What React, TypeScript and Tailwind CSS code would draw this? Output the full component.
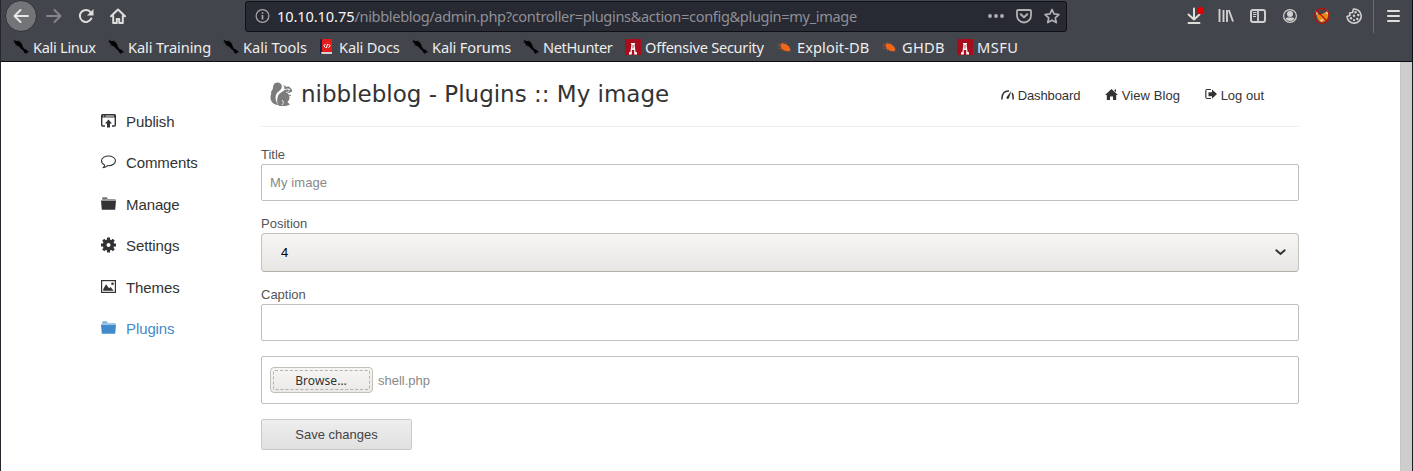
import React from 'react';

const CHROME = "font-['Noto_Sans',sans-serif]";

function Svg({ w = 16, h = 16, vb, className = '', children }: { w?: number; h?: number; vb?: string; className?: string; children: React.ReactNode }) {
  return (
    <svg width={w} height={h} viewBox={vb ?? `0 0 ${w} ${h}`} className={`block shrink-0 ${className}`} fill="none">
      {children}
    </svg>
  );
}

const Kali = () => (
  <Svg>
    <path d="M.5.5L3 2l2 0 2.500 1.200L9 5l.8 2.800 1.400 2 1.800.7 2.700 2.200-.5.800-2 .2 0 1.500-2.200-2-.7-1.700L8 9.800 6 7.500 3.500 6 2 4z" fill="#000" />
    <path d="M0 3l4 2.500M2 6.500l4 .5M5 1.500l3 1.500" stroke="#111" strokeWidth=".5" />
  </Svg>
);
const Docs = () => (
  <Svg>
    <path d="M1 1.500C1 .6 1.600 0 2.500 0H4v15H1z" fill="#16233f" />
    <path d="M3 0h10v13H3z" fill="#e21b1b" />
    <path d="M2 13h11v2H2.500z" fill="#d6d0d0" />
    <path d="M6.500 5L4.900 6.800l1.600 1.800M9.500 5l1.700 1.800-1.700 1.800M8.600 4.800L7.400 9" stroke="#fff" strokeWidth="1" />
  </Svg>
);
const Tower = () => (
  <Svg>
    <path d="M0 0h16v16H0z" fill="#a90d1c" />
    <path d="M6 4h4v1.200h-.5l1.100 8H12V15.500H9.200V11H6.800v4.500H4v-2.300h1.400l1.100-8H6z" fill="#fff" />
    <path d="M7.600 6h.8v3.500h-.8z" fill="#a90d1c" />
  </Svg>
);
const Bug = () => (
  <Svg>
    <path d="M3.500 5.500l1.500-1.200 4 1 3 2.200 1.500 3-1.500 2-3.500-.5-4-2z" fill="#f2661a" />
    <path d="M1 5l3 .5M1 9.500l4-.5M5 3l2 2M8 3l2 3M5 12l2-2M13 12l1.500.5M0 7h4" stroke="#b0552a" strokeWidth=".6" />
  </Svg>
);

const bookmarks: { label: string; icon: React.ReactNode; box: string; spacing: string }[] = [
  { label: 'Kali Linux', icon: <Kali />, box: 'w-[95px]', spacing: 'tracking-[-0.3px]' },
  { label: 'Kali Training', icon: <Kali />, box: 'w-[115px]', spacing: 'tracking-[-0.1px]' },
  { label: 'Kali Tools', icon: <Kali />, box: 'w-[96px]', spacing: '' },
  { label: 'Kali Docs', icon: <Docs />, box: 'w-[93px]', spacing: 'tracking-[-0.15px]' },
  { label: 'Kali Forums', icon: <Kali />, box: 'w-[111px]', spacing: 'tracking-[-0.15px]' },
  { label: 'NetHunter', icon: <Kali />, box: 'w-[102px]', spacing: 'tracking-[-0.4px]' },
  { label: 'Offensive Security', icon: <Tower />, box: 'w-[152px]', spacing: 'tracking-[-0.27px]' },
  { label: 'Exploit-DB', icon: <Bug />, box: 'w-[105px]', spacing: 'tracking-[0.1px]' },
  { label: 'GHDB', icon: <Bug />, box: 'w-[75px]', spacing: 'tracking-[0.3px]' },
  { label: 'MSFU', icon: <Tower />, box: 'w-[70px]', spacing: 'tracking-[0.5px]' },
];

function Toolbar() {
  return (
    <div className="flex h-8 items-center pl-1 text-[#d8d8d8]">
      <div className="flex h-8 w-8 shrink-0 items-center justify-center rounded-full border border-[#303136] bg-[#737478]">
        <Svg><path d="M15 8H1.800M7.500 2L1.500 8l6 6" stroke="#e6e6e4" strokeWidth="2" strokeLinecap="round" strokeLinejoin="round" /></Svg>
      </div>
      <Svg className="ml-[9px]"><path d="M1 8h13.200M8.500 2l6 6-6 6" stroke="#85868a" strokeWidth="2" strokeLinecap="round" strokeLinejoin="round" /></Svg>
      <Svg className="ml-4">
        <path d="M13.300 10.500A6 6 0 1 1 12.700 4.300" stroke="#dededa" strokeWidth="2" strokeLinecap="round" />
        <path d="M15.500 1v6.500H9z" fill="#dededa" />
      </Svg>
      <Svg className="ml-4">
        <path d="M1 8.200l7-6.700 7 6.700M3.200 8v7h3.600v-4h2.400v4h3.600V8" stroke="#dededa" strokeWidth="2" strokeLinejoin="round" strokeLinecap="round" />
      </Svg>
      <div className="ml-[119px] flex h-[31px] w-[822px] shrink-0 items-center rounded-[3px] border border-[#0f1014] bg-[#272933] pl-[9px] pr-[6px]">
        <Svg>
          <circle cx="7.500" cy="8" r="6.400" stroke="#a9a9ac" strokeWidth="1.200" />
          <path d="M7.500 7v4.500M7.500 4.200v1.600" stroke="#a9a9ac" strokeWidth="1.700" />
        </Svg>
        <span className={`${CHROME} ml-[6px] w-[590px] whitespace-nowrap text-[14.6px] leading-[20px] tracking-[-0.35px] text-[#8f9096]`}>
          <span className="tracking-[-0.1px] text-[#f5f5f5]">10.10.10.75</span>/nibbleblog/admin.php?controller=plugins&amp;action=config&amp;plugin=my_image
        </span>
        <div className="ml-auto flex items-center gap-3">
          <Svg><circle cx="2" cy="8" r="1.900" fill="#b2b2b4" /><circle cx="8" cy="8" r="1.900" fill="#b2b2b4" /><circle cx="14" cy="8" r="1.900" fill="#b2b2b4" /></Svg>
          <Svg>
            <path d="M2 2h12a1 1 0 0 1 1 1v4.500a7 7 0 0 1-14 0V3a1 1 0 0 1 1-1z" stroke="#b2b2b4" strokeWidth="1.800" />
            <path d="M4.700 6.200L8 9.300l3.300-3.100" stroke="#b2b2b4" strokeWidth="2" strokeLinecap="round" strokeLinejoin="round" />
          </Svg>
          <Svg><path d="M8 1.500l2 4.400 4.900.6-3.600 3.300 1 4.800L8 12.200l-4.300 2.400 1-4.800L1.100 6.500 6 5.900z" stroke="#b2b2b4" strokeWidth="1.700" strokeLinejoin="round" /></Svg>
        </div>
      </div>
      <div className="ml-[119px] flex items-center gap-4">
        <Svg className="overflow-visible">
          <path d="M8 .5V11M2.500 6.500L8 11.500l5.500-5M2.500 15h11" stroke="#dededa" strokeWidth="2" strokeLinecap="round" strokeLinejoin="round" />
          <circle cx="14.500" cy="2.700" r="3.600" fill="#e00000" />
        </Svg>
        <Svg><path d="M1.500 1v13M5.500 2v12M9 2v12M10.800 2l4.200 11.500" stroke="#d0d0ce" strokeWidth="1.900" /></Svg>
        <Svg>
          <rect x="1" y="2" width="14" height="12" rx="2" stroke="#d0d0ce" strokeWidth="2" />
          <path d="M8 2v12" stroke="#d0d0ce" strokeWidth="1.800" /><path d="M3 4.500h3.500M3 6.500h3.500M3 8.500h3" stroke="#d0d0ce" />
        </Svg>
        <Svg>
          <circle cx="8" cy="8" r="6.400" stroke="#d0d0ce" strokeWidth="1.200" />
          <circle cx="8" cy="6" r="3" fill="#d0d0ce" /><path d="M3.500 10.500C5 9 6 9.500 8 9.500s3-.5 4.500 1A5 5 0 0 1 8 13a5 5 0 0 1-4.500-2.500z" fill="#d0d0ce" />
        </Svg>
        <Svg>
          <path d="M2 5l4 2 4-2 4-2 .5 5-2 4-4 2.500-3-1-2-3z" fill="#e58a12" />
          <path d="M1 3l3 1.500L3 7zM14 2l-2.500 3L14 6.500zM6 12l3-1-1 3z" fill="#e6ddd4" />
          <circle cx="8" cy="8" r="7.300" stroke="#c30d0d" strokeWidth="1.200" /><path d="M3 3l10 10" stroke="#c30d0d" strokeWidth="1.200" />
        </Svg>
        <Svg>
          <path d="M7.500 1A7.100 7.100 0 1 1 1 8.500L4 7.500 3.500 5l3-.5z" stroke="#d0d0ce" strokeWidth="1.600" strokeLinejoin="round" />
          <g fill="#d0d0ce"><circle cx="9.500" cy="4.300" r="1.200" /><circle cx="12.300" cy="7" r="1.200" /><circle cx="8" cy="7.800" r="1.200" /><circle cx="11.300" cy="11" r="1.200" /><circle cx="5" cy="10.300" r="1.200" /><circle cx="8" cy="12.200" r="1.100" /></g>
        </Svg>
      </div>
      <div className="ml-[11px] h-[33px] w-px bg-[#6b6c71]" />
      <Svg className="ml-3"><path d="M2 3h11M2 8h11M2 13h11" stroke="#dededa" strokeWidth="2" strokeLinecap="round" /></Svg>
    </div>
  );
}

const side: { label: string; icon: React.ReactNode; active?: boolean }[] = [
  { label: 'Publish', icon: <><path d="M4 12H1.600Q.7 12 .7 11V1.500Q.7.700 1.600.7h11.800q.9 0 .9.800V11q0 1-.9 1H11" stroke="currentColor" strokeWidth="1.400" /><path d="M1 1h13v2.500H1z" fill="currentColor" /><path d="M2 2h1.200M4.500 2h8.500" stroke="#fff" strokeWidth=".9" /><path d="M7.500 5.500l3.500 4H9V13.500H6V9.500H4z" fill="currentColor" /></> },
  { label: 'Comments', icon: <path d="M2 12.700c1.300-.7 1.700-1.500 1.600-2.700C1.500 9 .5 7.700.5 5.800.5 3.100 3.700 1 7.500 1s7 2.100 7 4.800-3.200 4.900-7 4.900l-1-.1c-1 1.100-2.800 1.900-4.500 2.100z" stroke="currentColor" strokeWidth="1.100" strokeLinejoin="round" /> },
  { label: 'Manage', icon: <Folder /> },
  { label: 'Settings', icon: <><circle cx="7.500" cy="7" r="3.900" stroke="currentColor" strokeWidth="3.800" /><path d="M7.500 -.5v3M7.500 11.500v3M0 7h3M12 7h3M2.200 1.700l2 2M10.800 10.300l2 2M12.800 1.700l-2 2M4.200 10.300l-2 2" stroke="currentColor" strokeWidth="3" /></> },
  { label: 'Themes', icon: <><rect x=".6" y=".6" width="13.800" height="11.800" stroke="currentColor" strokeWidth="1.200" /><path d="M2.200 10.800V9.300l2.800-5 3 4 1.500-1.200 3.200 3.700z" fill="currentColor" /><circle cx="11.500" cy="3.800" r="1.300" fill="currentColor" /></> },
  { label: 'Plugins', icon: <Folder />, active: true },
];

function Folder() {
  return (
    <>
      <path d="M1 3V1.200h5l1 .8h7.500v1z" fill="currentColor" opacity=".5" />
      <path d="M1.500.5h4.200l.8 1H1.500z" fill="currentColor" />
      <path d="M0 3.500h15l-.8 9.300H.8z" fill="currentColor" />
    </>
  );
}

function Squirrel() {
  return (
    <Svg w={23} h={25} className="ml-[9px]">
      <path d="M1 10C2 8 3 7.500 3 5 3.500 1.500 6 0 9 .8c3 .7 3.500 4 2.200 6-1.500 2.500-5 3.700-5.500 7.500-.5 3 .5 6 2.500 8.700C3 23 .5 19 .5 15.500c0-2.500 1.200-3.500.5-5.500z" fill="#7c7c7c" />
      <path d="M8 14c1-3 5-4 7-6.500-1.200-1.500-1-3 0-4.500l.8 2C17.500 4 19.500 4 21 6.500c1.200 1.500 1.500 2.500.5 3.500l-4 1.500c2 1.500 2.500 4.500 1.500 6.500l-1.500 2 2.500 2.500-4 1.500H9c-2-2.500-2.500-6.500-1-10z" fill="#7c7c7c" />
      <path d="M14.500 7.800l3.500-1 2 1.300M16 10.500l3-.8M12 23c2-2 1.500-4 0-5" stroke="#fff" strokeWidth=".8" />
      <circle cx="19" cy="7.600" r=".8" fill="#fff" />
      <path d="M18 13l3 .5M13.500 3.500L15 5" stroke="#7c7c7c" />
    </Svg>
  );
}

const INPUT = 'rounded-[2px] border border-[#bfbfbf] bg-white';
const LABEL = 'h-[19px] text-[13px] leading-[19px] text-[#555]';

export default function App() {
  return (
    <div className="flex h-[471px] w-[1413px] flex-col overflow-hidden border-l border-[#24252d] bg-white font-['Liberation_Sans',Arial,sans-serif] text-[#333]">
      <header className="h-[62px] shrink-0 border-b border-r border-[#0c0c12] bg-[#43454c]">
        <Toolbar />
        <nav className={`${CHROME} flex h-[29px] items-center pl-3 text-[14.6px] text-[#eeeeec]`}>
          {bookmarks.map((b) => (
            <div key={b.label} className={`${b.box} flex h-5 shrink-0 items-center gap-1 whitespace-nowrap leading-5`}>
              {b.icon}
              <span className={b.spacing}>{b.label}</span>
            </div>
          ))}
        </nav>
      </header>

      <div className="flex min-h-0 flex-1">
        <aside className="w-[260px] shrink-0 pl-[100px] pt-[39px]">
          {side.map((s) => (
            <a key={s.label} className={`flex h-[41.4px] items-start text-[15px] leading-[41.4px] ${s.active ? 'text-[#428bca]' : 'text-[#333]'}`}>
              <Svg w={15} h={14} className="mt-[13px] overflow-visible">{s.icon}</Svg>
              <span className="ml-[10px] tracking-[-0.1px]">{s.label}</span>
            </a>
          ))}
        </aside>

        <main className="w-[1038px] shrink-0">
          <div className="flex h-[65px] items-center border-b border-[#eee]">
            <Squirrel />
            <h1 className="ml-2 whitespace-nowrap font-['DejaVu_Sans',sans-serif] text-[23px] leading-[30px] text-[#333]">nibbleblog - Plugins :: My image</h1>
            <div className="ml-auto flex pr-[35px] pt-1 text-[13px] leading-5">
              <a className="flex w-[104px] items-center">
                <Svg w={13} h={13} className="mb-[3px]"><path d="M1 11.500C.5 5.500 4 2.500 8 3M11 5c1 1.500 1.300 4 1 6.500" stroke="#333" strokeWidth="1.500" /><path d="M10.500 2.500L8 10c-.7 1.500-3 1-2.500-.7z" fill="#333" /></Svg>
                <span className="ml-1 tracking-[-0.1px]">Dashboard</span>
              </a>
              <a className="flex w-[100px] items-center">
                <Svg w={13} h={13} className="mb-[3px]"><path d="M6.500 1L13 7h-1.800v5H8V8.500H5V12H1.800V7H0L6.500 1zM9.500 1.500H11V4L9.500 3z" fill="#333" /></Svg>
                <span className="ml-1 tracking-[0.1px]">View Blog</span>
              </a>
              <a className="flex items-center">
                <Svg w={12} h={13} className="mb-[3px]"><path d="M6 1.500H2.200Q.8 1.500.8 3v6q0 1.500 1.400 1.500H6" stroke="#333" strokeWidth="1.200" /><path d="M3.500 4.200H7V1.500l5 4.600-5 4.700V8.200H3.500z" fill="#333" /></Svg>
                <span className="ml-1">Log out</span>
              </a>
            </div>
          </div>

          <div className="flex flex-col pt-[18px]">
            <label className={LABEL}>Title</label>
            <div className={`${INPUT} flex h-[37px] items-center pl-2 text-[13px] tracking-[0.1px] text-[#888]`}>My image</div>
            <label className={`${LABEL} mt-[13px]`}>Position</label>
            <div className="flex h-[39px] items-center justify-between rounded-[4px] border border-[#c4c0bc] border-b-[#b6afa7] bg-linear-to-b from-[#f6f5f4] to-[#e8e7e6] pl-[19px] pr-3 text-[13px] text-black">
              <span>4</span>
              <Svg w={11} h={7}><path d="M1.300 1.300L5.500 5l4.200-3.700" stroke="#2e3436" strokeWidth="2" strokeLinecap="round" /></Svg>
            </div>
            <label className={`${LABEL} mt-[13px]`}>Caption</label>
            <div className={`${INPUT} h-[37px]`} />
            <div className={`${INPUT} mt-[15px] flex h-[48px] items-center pl-2 text-[13px] text-[#888]`}>
              <div className="h-[26px] w-[103px] rounded-[4px] border border-[#c4beb8] bg-linear-to-b from-[#f6f5f4] to-[#eceae8] p-[2px]">
                <div className={`${CHROME} flex h-full items-center justify-center rounded-[2px] border border-dashed border-[#b4b2b0] pr-px pt-px text-[12px] tracking-[0.1px] text-[#333]`}>Browse…</div>
              </div>
              <span className="ml-[5px] pt-px">shell.php</span>
            </div>
            <button className="mt-[15px] h-[31px] w-[151px] rounded-[2px] border border-[#c9c9c9] bg-linear-to-b from-[#eee] to-[#e0e0e0] text-[13px] text-[#444]">Save changes</button>
          </div>
        </main>
        <div className="ml-auto w-[13px] border-l border-r border-l-[#c9c5c0] border-r-[#1b1c26] bg-[#cdcdcd]" />
      </div>
    </div>
  );
}
